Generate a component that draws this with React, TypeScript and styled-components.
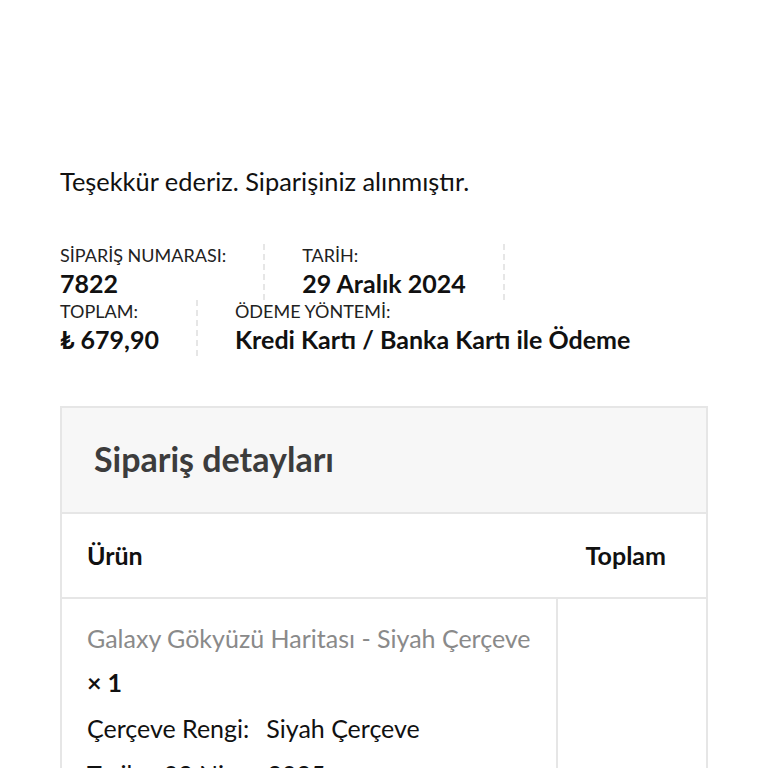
import React from 'react';
import styled, { createGlobalStyle } from 'styled-components';

interface OverviewItem {
  label: string;
  value: string;
}

const overviewRows: OverviewItem[][] = [
  [
    { label: 'SİPARİŞ NUMARASI:', value: '7822' },
    { label: 'TARİH:', value: '29 Aralık 2024' },
  ],
  [
    { label: 'TOPLAM:', value: '₺ 679,90' },
    { label: 'ÖDEME YÖNTEMİ:', value: 'Kredi Kartı / Banka Kartı ile Ödeme' },
  ],
];

const App: React.FC = () => {
  return (
    <Page>
      <GlobalStyle />
      <Notice>Teşekkür ederiz. Siparişiniz alınmıştır.</Notice>

      <Overview>
        {overviewRows.map((row, ri) => (
          <OverviewRow key={ri}>
            {row.map((item, i) => (
              <OverviewItemBox key={item.label} $last={i === row.length - 1 && ri === 1}>
                <Label>{item.label}</Label>
                <Value>{item.value}</Value>
              </OverviewItemBox>
            ))}
          </OverviewRow>
        ))}
      </Overview>

      <DetailsBox>
        <DetailsTitle>Sipariş detayları</DetailsTitle>
        <Table>
          <thead>
            <tr>
              <Th>Ürün</Th>
              <Th $right>Toplam</Th>
            </tr>
          </thead>
          <tbody>
            <tr>
              <Td>
                <ProductName>Galaxy Gökyüzü Haritası - Siyah Çerçeve</ProductName>
                <Qty>× 1</Qty>
                <Meta>
                  <span>Çerçeve Rengi:</span>
                  <span>Siyah Çerçeve</span>
                </Meta>
                <Meta>
                  <span>Tarih:</span>
                  <span>03 Nisan 2025</span>
                </Meta>
              </Td>
              <Td $side />
            </tr>
          </tbody>
        </Table>
      </DetailsBox>
    </Page>
  );
};

export default App;

const GlobalStyle = createGlobalStyle`
  body {
    margin: 0;
    background: #fff;
    font-family: Lato, "Noto Sans", sans-serif;
    color: #111;
  }
`;

const Page = styled.div`
  padding: 166px 60px 0;
  height: 768px;
  box-sizing: border-box;
  overflow: hidden;
`;

const Notice = styled.p`
  margin: 0 0 48px;
  font-size: 25.4px;
  line-height: 30px;
  color: #111;
`;

const Overview = styled.div`
  display: flex;
  flex-direction: column;
  margin-bottom: 50px;
`;

const OverviewRow = styled.div`
  display: flex;
`;

const OverviewItemBox = styled.div<{ $last?: boolean }>`
  padding-right: 37px;
  margin-right: 37px;
  border-right: ${(p) => (p.$last ? 'none' : '2px dashed #e6e6e6')};
`;

const Label = styled.div`
  font-size: 18px;
  line-height: 22px;
  color: #222;
`;

const Value = styled.div`
  font-size: 25px;
  line-height: 34px;
  font-weight: 700;
  color: #111;
`;

const DetailsBox = styled.div`
  border: 2px solid #e6e6e6;
`;

const DetailsTitle = styled.h2`
  margin: 0;
  padding: 0 32px 4px;
  height: 106px;
  box-sizing: border-box;
  display: flex;
  align-items: center;
  background: #f7f7f7;
  border-bottom: 2px solid #e6e6e6;
  font-size: 34px;
  font-weight: 700;
  color: #3c3c3c;
`;

const Table = styled.table`
  width: 100%;
  border-collapse: collapse;
`;

const Th = styled.th<{ $right?: boolean }>`
  height: 81px;
  padding: 0 40px 2px 25px;
  text-align: ${(p) => (p.$right ? 'right' : 'left')};
  font-size: 25px;
  font-weight: 700;
  color: #111;
  border-bottom: 2px solid #e6e6e6;
`;

const Td = styled.td<{ $side?: boolean }>`
  vertical-align: top;
  padding: 22px 25px;
  width: ${(p) => (p.$side ? '98px' : 'auto')};
  border-left: ${(p) => (p.$side ? '2px solid #e6e6e6' : 'none')};
`;

const ProductName = styled.div`
  font-size: 25px;
  line-height: 34px;
  color: #8a8a8a;
`;

const Qty = styled.div`
  margin-top: 12px;
  font-size: 25px;
  font-weight: 700;
  line-height: 30px;
`;

const Meta = styled.div`
  margin-top: 16px;
  display: flex;
  gap: 17px;
  font-size: 25px;
  line-height: 30px;
  color: #111;
`;
